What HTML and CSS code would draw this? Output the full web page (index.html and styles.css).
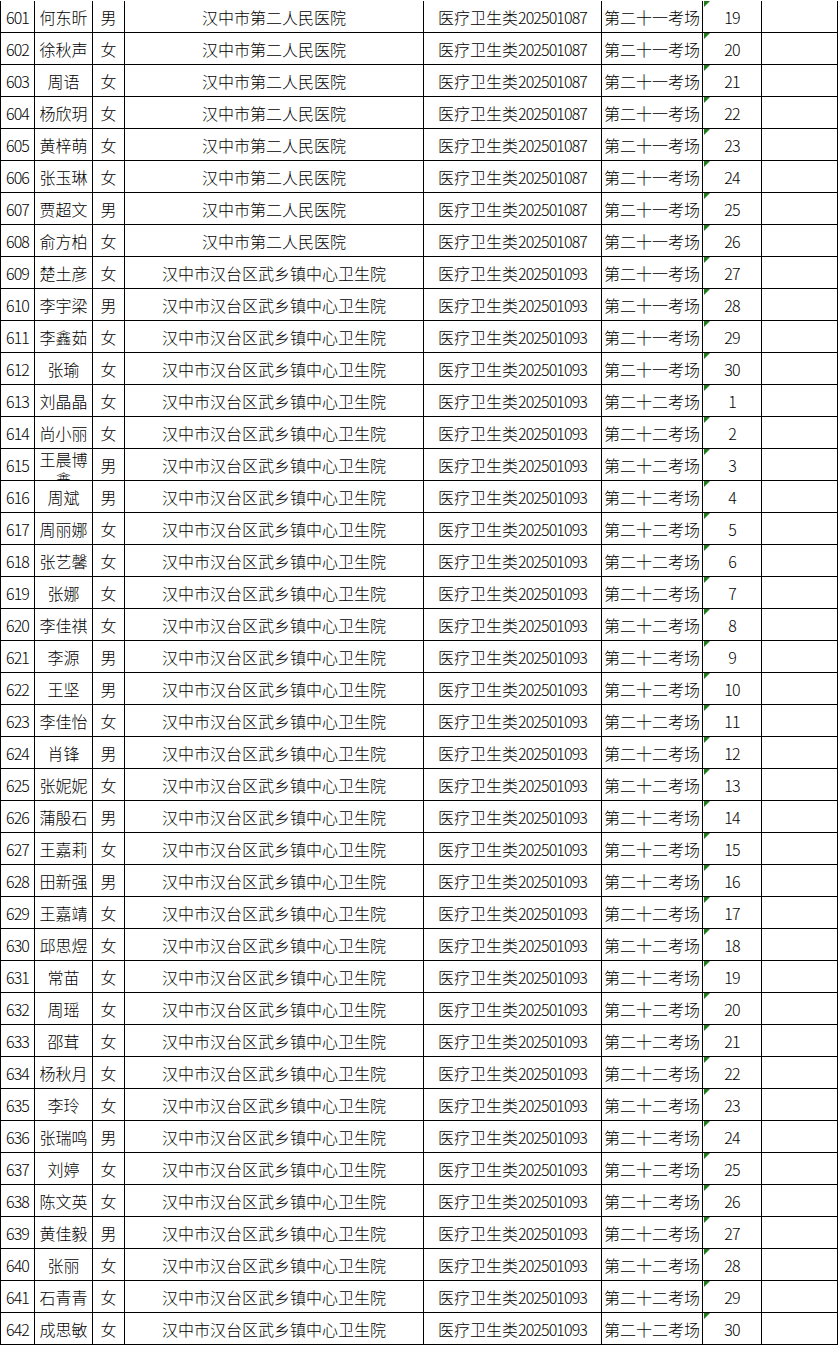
FILE: index.html
```html
<!DOCTYPE html>
<html lang="zh-CN">
<head>
<meta charset="utf-8">
<title>考场安排</title>
<link rel="stylesheet" href="styles.css">
</head>
<body>
<div class="sheet">
<div class="row"><div class="c num">601</div><div class="c">何东昕</div><div class="c">男</div><div class="c">汉中市第二人民医院</div><div class="c">医疗卫生类<span class="n">202501087</span></div><div class="c">第二十一考场</div><div class="c num seat">19</div><div class="c"></div></div>
<div class="row"><div class="c num">602</div><div class="c">徐秋声</div><div class="c">女</div><div class="c">汉中市第二人民医院</div><div class="c">医疗卫生类<span class="n">202501087</span></div><div class="c">第二十一考场</div><div class="c num seat">20</div><div class="c"></div></div>
<div class="row"><div class="c num">603</div><div class="c">周语</div><div class="c">女</div><div class="c">汉中市第二人民医院</div><div class="c">医疗卫生类<span class="n">202501087</span></div><div class="c">第二十一考场</div><div class="c num seat">21</div><div class="c"></div></div>
<div class="row"><div class="c num">604</div><div class="c">杨欣玥</div><div class="c">女</div><div class="c">汉中市第二人民医院</div><div class="c">医疗卫生类<span class="n">202501087</span></div><div class="c">第二十一考场</div><div class="c num seat">22</div><div class="c"></div></div>
<div class="row"><div class="c num">605</div><div class="c">黄梓萌</div><div class="c">女</div><div class="c">汉中市第二人民医院</div><div class="c">医疗卫生类<span class="n">202501087</span></div><div class="c">第二十一考场</div><div class="c num seat">23</div><div class="c"></div></div>
<div class="row"><div class="c num">606</div><div class="c">张玉琳</div><div class="c">女</div><div class="c">汉中市第二人民医院</div><div class="c">医疗卫生类<span class="n">202501087</span></div><div class="c">第二十一考场</div><div class="c num seat">24</div><div class="c"></div></div>
<div class="row"><div class="c num">607</div><div class="c">贾超文</div><div class="c">男</div><div class="c">汉中市第二人民医院</div><div class="c">医疗卫生类<span class="n">202501087</span></div><div class="c">第二十一考场</div><div class="c num seat">25</div><div class="c"></div></div>
<div class="row"><div class="c num">608</div><div class="c">俞方柏</div><div class="c">女</div><div class="c">汉中市第二人民医院</div><div class="c">医疗卫生类<span class="n">202501087</span></div><div class="c">第二十一考场</div><div class="c num seat">26</div><div class="c"></div></div>
<div class="row"><div class="c num">609</div><div class="c">楚土彦</div><div class="c">女</div><div class="c">汉中市汉台区武乡镇中心卫生院</div><div class="c">医疗卫生类<span class="n">202501093</span></div><div class="c">第二十一考场</div><div class="c num seat">27</div><div class="c"></div></div>
<div class="row"><div class="c num">610</div><div class="c">李宇梁</div><div class="c">男</div><div class="c">汉中市汉台区武乡镇中心卫生院</div><div class="c">医疗卫生类<span class="n">202501093</span></div><div class="c">第二十一考场</div><div class="c num seat">28</div><div class="c"></div></div>
<div class="row"><div class="c num">611</div><div class="c">李鑫茹</div><div class="c">女</div><div class="c">汉中市汉台区武乡镇中心卫生院</div><div class="c">医疗卫生类<span class="n">202501093</span></div><div class="c">第二十一考场</div><div class="c num seat">29</div><div class="c"></div></div>
<div class="row"><div class="c num">612</div><div class="c">张瑜</div><div class="c">女</div><div class="c">汉中市汉台区武乡镇中心卫生院</div><div class="c">医疗卫生类<span class="n">202501093</span></div><div class="c">第二十一考场</div><div class="c num seat">30</div><div class="c"></div></div>
<div class="row"><div class="c num">613</div><div class="c">刘晶晶</div><div class="c">女</div><div class="c">汉中市汉台区武乡镇中心卫生院</div><div class="c">医疗卫生类<span class="n">202501093</span></div><div class="c">第二十二考场</div><div class="c num seat">1</div><div class="c"></div></div>
<div class="row"><div class="c num">614</div><div class="c">尚小丽</div><div class="c">女</div><div class="c">汉中市汉台区武乡镇中心卫生院</div><div class="c">医疗卫生类<span class="n">202501093</span></div><div class="c">第二十二考场</div><div class="c num seat">2</div><div class="c"></div></div>
<div class="row"><div class="c num">615</div><div class="c wrap"><span class="w">王晨博鑫</span></div><div class="c">男</div><div class="c">汉中市汉台区武乡镇中心卫生院</div><div class="c">医疗卫生类<span class="n">202501093</span></div><div class="c">第二十二考场</div><div class="c num seat">3</div><div class="c"></div></div>
<div class="row"><div class="c num">616</div><div class="c">周斌</div><div class="c">男</div><div class="c">汉中市汉台区武乡镇中心卫生院</div><div class="c">医疗卫生类<span class="n">202501093</span></div><div class="c">第二十二考场</div><div class="c num seat">4</div><div class="c"></div></div>
<div class="row"><div class="c num">617</div><div class="c">周丽娜</div><div class="c">女</div><div class="c">汉中市汉台区武乡镇中心卫生院</div><div class="c">医疗卫生类<span class="n">202501093</span></div><div class="c">第二十二考场</div><div class="c num seat">5</div><div class="c"></div></div>
<div class="row"><div class="c num">618</div><div class="c">张艺馨</div><div class="c">女</div><div class="c">汉中市汉台区武乡镇中心卫生院</div><div class="c">医疗卫生类<span class="n">202501093</span></div><div class="c">第二十二考场</div><div class="c num seat">6</div><div class="c"></div></div>
<div class="row"><div class="c num">619</div><div class="c">张娜</div><div class="c">女</div><div class="c">汉中市汉台区武乡镇中心卫生院</div><div class="c">医疗卫生类<span class="n">202501093</span></div><div class="c">第二十二考场</div><div class="c num seat">7</div><div class="c"></div></div>
<div class="row"><div class="c num">620</div><div class="c">李佳祺</div><div class="c">女</div><div class="c">汉中市汉台区武乡镇中心卫生院</div><div class="c">医疗卫生类<span class="n">202501093</span></div><div class="c">第二十二考场</div><div class="c num seat">8</div><div class="c"></div></div>
<div class="row"><div class="c num">621</div><div class="c">李源</div><div class="c">男</div><div class="c">汉中市汉台区武乡镇中心卫生院</div><div class="c">医疗卫生类<span class="n">202501093</span></div><div class="c">第二十二考场</div><div class="c num seat">9</div><div class="c"></div></div>
<div class="row"><div class="c num">622</div><div class="c">王坚</div><div class="c">男</div><div class="c">汉中市汉台区武乡镇中心卫生院</div><div class="c">医疗卫生类<span class="n">202501093</span></div><div class="c">第二十二考场</div><div class="c num seat">10</div><div class="c"></div></div>
<div class="row"><div class="c num">623</div><div class="c">李佳怡</div><div class="c">女</div><div class="c">汉中市汉台区武乡镇中心卫生院</div><div class="c">医疗卫生类<span class="n">202501093</span></div><div class="c">第二十二考场</div><div class="c num seat">11</div><div class="c"></div></div>
<div class="row"><div class="c num">624</div><div class="c">肖锋</div><div class="c">男</div><div class="c">汉中市汉台区武乡镇中心卫生院</div><div class="c">医疗卫生类<span class="n">202501093</span></div><div class="c">第二十二考场</div><div class="c num seat">12</div><div class="c"></div></div>
<div class="row"><div class="c num">625</div><div class="c">张妮妮</div><div class="c">女</div><div class="c">汉中市汉台区武乡镇中心卫生院</div><div class="c">医疗卫生类<span class="n">202501093</span></div><div class="c">第二十二考场</div><div class="c num seat">13</div><div class="c"></div></div>
<div class="row"><div class="c num">626</div><div class="c">蒲殷石</div><div class="c">男</div><div class="c">汉中市汉台区武乡镇中心卫生院</div><div class="c">医疗卫生类<span class="n">202501093</span></div><div class="c">第二十二考场</div><div class="c num seat">14</div><div class="c"></div></div>
<div class="row"><div class="c num">627</div><div class="c">王嘉莉</div><div class="c">女</div><div class="c">汉中市汉台区武乡镇中心卫生院</div><div class="c">医疗卫生类<span class="n">202501093</span></div><div class="c">第二十二考场</div><div class="c num seat">15</div><div class="c"></div></div>
<div class="row"><div class="c num">628</div><div class="c">田新强</div><div class="c">男</div><div class="c">汉中市汉台区武乡镇中心卫生院</div><div class="c">医疗卫生类<span class="n">202501093</span></div><div class="c">第二十二考场</div><div class="c num seat">16</div><div class="c"></div></div>
<div class="row"><div class="c num">629</div><div class="c">王嘉靖</div><div class="c">女</div><div class="c">汉中市汉台区武乡镇中心卫生院</div><div class="c">医疗卫生类<span class="n">202501093</span></div><div class="c">第二十二考场</div><div class="c num seat">17</div><div class="c"></div></div>
<div class="row"><div class="c num">630</div><div class="c">邱思煜</div><div class="c">女</div><div class="c">汉中市汉台区武乡镇中心卫生院</div><div class="c">医疗卫生类<span class="n">202501093</span></div><div class="c">第二十二考场</div><div class="c num seat">18</div><div class="c"></div></div>
<div class="row"><div class="c num">631</div><div class="c">常苗</div><div class="c">女</div><div class="c">汉中市汉台区武乡镇中心卫生院</div><div class="c">医疗卫生类<span class="n">202501093</span></div><div class="c">第二十二考场</div><div class="c num seat">19</div><div class="c"></div></div>
<div class="row"><div class="c num">632</div><div class="c">周瑶</div><div class="c">女</div><div class="c">汉中市汉台区武乡镇中心卫生院</div><div class="c">医疗卫生类<span class="n">202501093</span></div><div class="c">第二十二考场</div><div class="c num seat">20</div><div class="c"></div></div>
<div class="row"><div class="c num">633</div><div class="c">邵茸</div><div class="c">女</div><div class="c">汉中市汉台区武乡镇中心卫生院</div><div class="c">医疗卫生类<span class="n">202501093</span></div><div class="c">第二十二考场</div><div class="c num seat">21</div><div class="c"></div></div>
<div class="row"><div class="c num">634</div><div class="c">杨秋月</div><div class="c">女</div><div class="c">汉中市汉台区武乡镇中心卫生院</div><div class="c">医疗卫生类<span class="n">202501093</span></div><div class="c">第二十二考场</div><div class="c num seat">22</div><div class="c"></div></div>
<div class="row"><div class="c num">635</div><div class="c">李玲</div><div class="c">女</div><div class="c">汉中市汉台区武乡镇中心卫生院</div><div class="c">医疗卫生类<span class="n">202501093</span></div><div class="c">第二十二考场</div><div class="c num seat">23</div><div class="c"></div></div>
<div class="row"><div class="c num">636</div><div class="c">张瑞鸣</div><div class="c">男</div><div class="c">汉中市汉台区武乡镇中心卫生院</div><div class="c">医疗卫生类<span class="n">202501093</span></div><div class="c">第二十二考场</div><div class="c num seat">24</div><div class="c"></div></div>
<div class="row"><div class="c num">637</div><div class="c">刘婷</div><div class="c">女</div><div class="c">汉中市汉台区武乡镇中心卫生院</div><div class="c">医疗卫生类<span class="n">202501093</span></div><div class="c">第二十二考场</div><div class="c num seat">25</div><div class="c"></div></div>
<div class="row"><div class="c num">638</div><div class="c">陈文英</div><div class="c">女</div><div class="c">汉中市汉台区武乡镇中心卫生院</div><div class="c">医疗卫生类<span class="n">202501093</span></div><div class="c">第二十二考场</div><div class="c num seat">26</div><div class="c"></div></div>
<div class="row"><div class="c num">639</div><div class="c">黄佳毅</div><div class="c">男</div><div class="c">汉中市汉台区武乡镇中心卫生院</div><div class="c">医疗卫生类<span class="n">202501093</span></div><div class="c">第二十二考场</div><div class="c num seat">27</div><div class="c"></div></div>
<div class="row"><div class="c num">640</div><div class="c">张丽</div><div class="c">女</div><div class="c">汉中市汉台区武乡镇中心卫生院</div><div class="c">医疗卫生类<span class="n">202501093</span></div><div class="c">第二十二考场</div><div class="c num seat">28</div><div class="c"></div></div>
<div class="row"><div class="c num">641</div><div class="c">石青青</div><div class="c">女</div><div class="c">汉中市汉台区武乡镇中心卫生院</div><div class="c">医疗卫生类<span class="n">202501093</span></div><div class="c">第二十二考场</div><div class="c num seat">29</div><div class="c"></div></div>
<div class="row"><div class="c num">642</div><div class="c">成思敏</div><div class="c">女</div><div class="c">汉中市汉台区武乡镇中心卫生院</div><div class="c">医疗卫生类<span class="n">202501093</span></div><div class="c">第二十二考场</div><div class="c num seat">30</div><div class="c"></div></div>
</div>
</body>
</html>
```
FILE: styles.css
```css
html, body {
  margin: 0;
  padding: 0;
  background: #ffffff;
}
body {
  padding-top: 1px;
  font-family: "Noto Sans CJK SC", "Noto Sans", sans-serif;
  font-weight: 300;
  font-size: 16px;
  color: #000000;
}
.sheet {
  width: 838px;
}
.row {
  display: grid;
  grid-template-columns: 34px 58px 32px 299px 178px 101px 59px 76px;
  height: 32px;
  box-sizing: border-box;
  border-bottom: 1px solid #000000;
  border-right: 1px solid #000000;
  width: 838px;
}
.c {
  box-sizing: border-box;
  border-left: 1px solid #000000;
  display: flex;
  align-items: center;
  justify-content: center;
  white-space: nowrap;
  overflow: hidden;
  line-height: 20px;
  position: relative;
}
.num,
.n {
  letter-spacing: -0.9px;
}
.c.wrap {
  align-items: flex-start;
  white-space: normal;
  text-align: center;
  padding-top: 0;
}
.c.wrap .w {
  display: block;
  width: 48px;
}
.seat::before {
  content: "";
  position: absolute;
  left: 1px;
  top: 0;
  width: 0;
  height: 0;
  border-top: 6px solid #1e7b1e;
  border-right: 6px solid transparent;
}
```
